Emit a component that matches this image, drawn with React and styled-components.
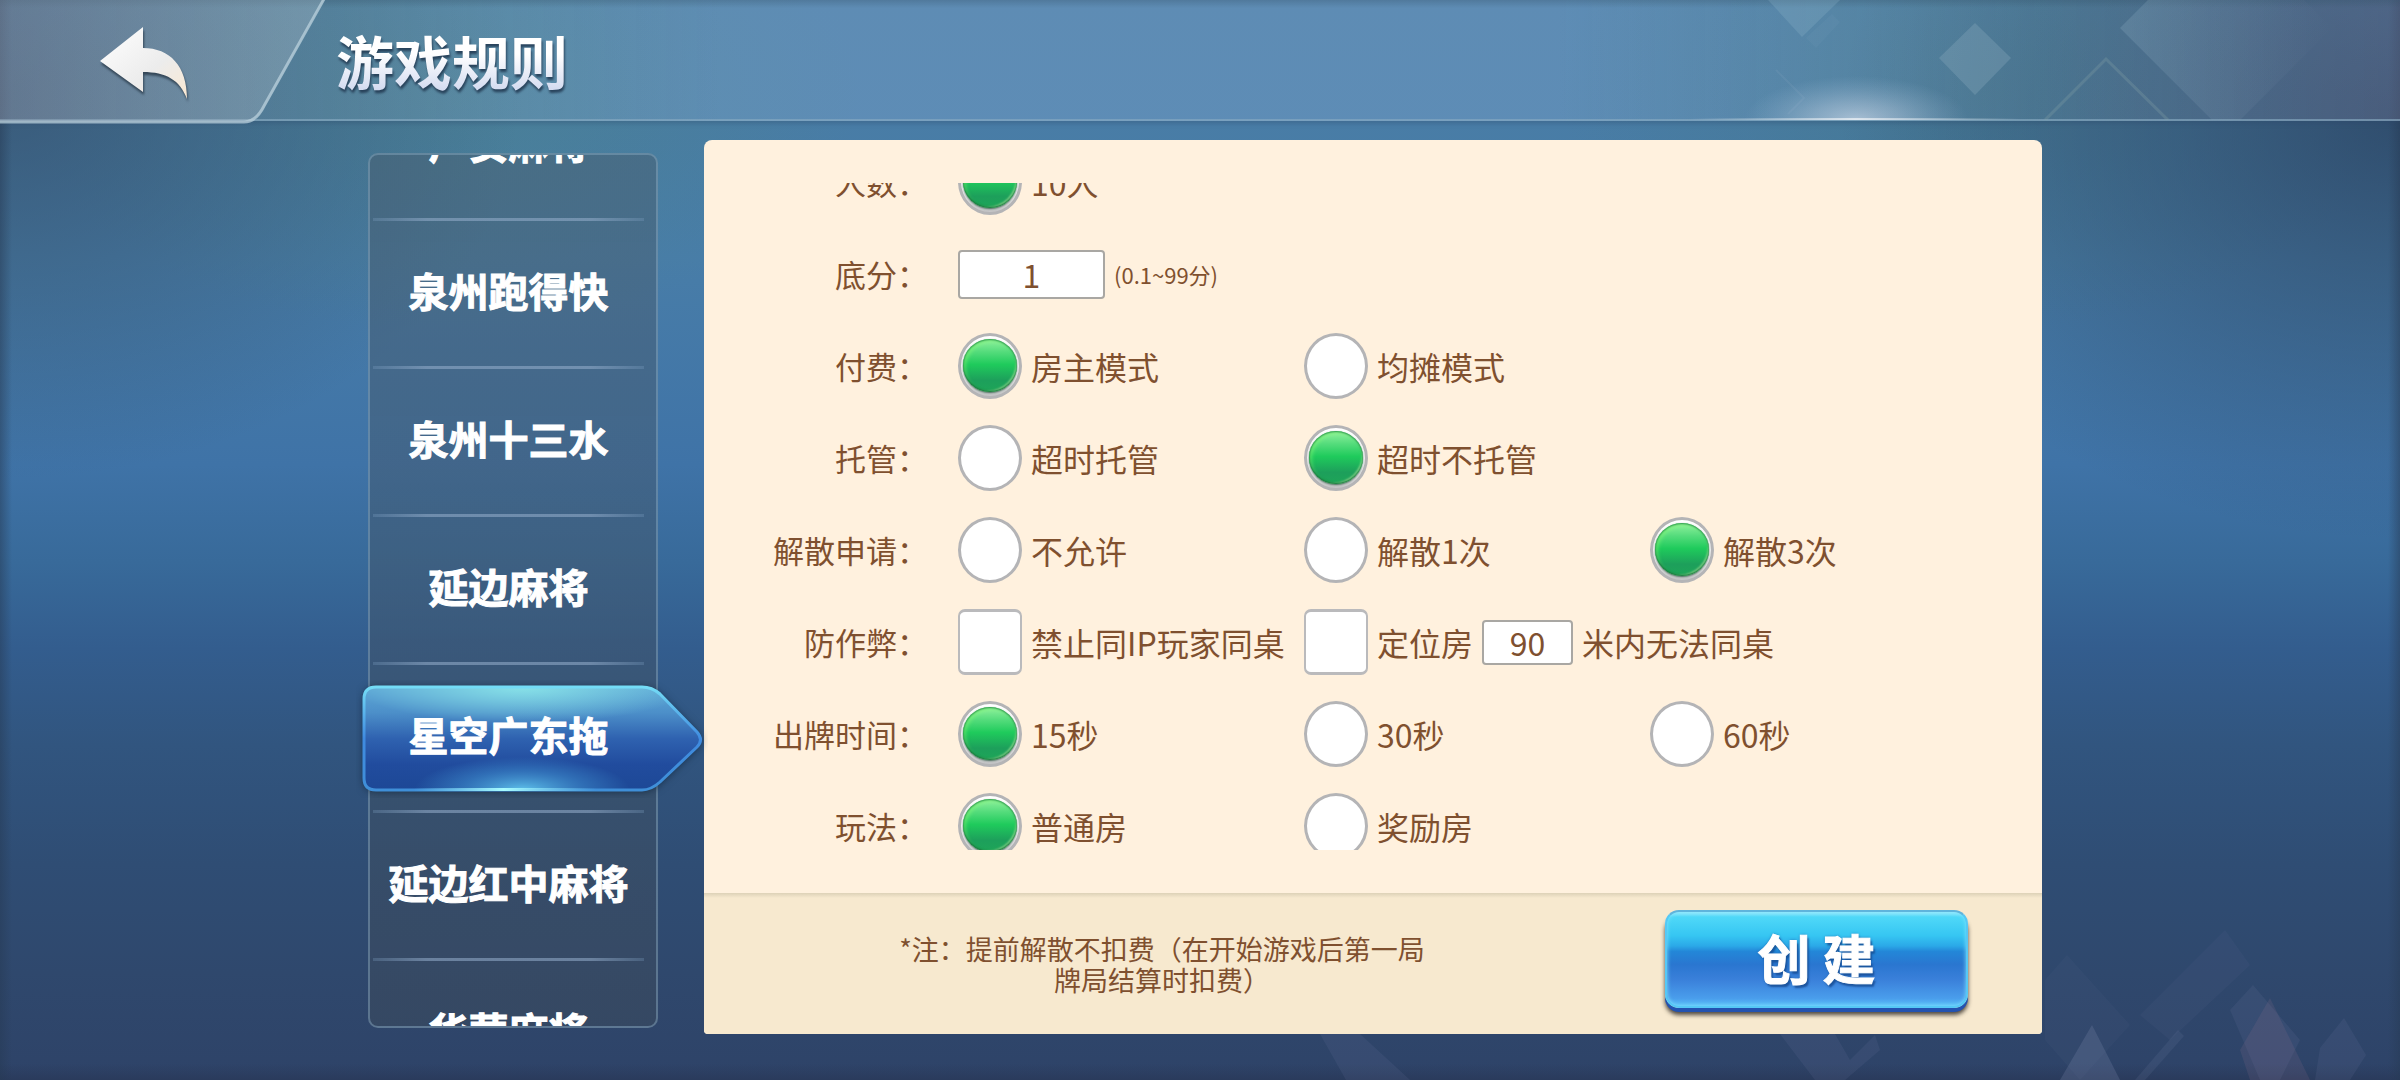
import React, { useState } from "react";
import styled, { createGlobalStyle, css } from "styled-components";

const sans = `"Noto Sans CJK SC", "Noto Sans", sans-serif`;
const brown = "#7f502f";

const GlobalStyle = createGlobalStyle`
  * {
    box-sizing: border-box;
  }

  body {
    margin: 0;
    font-family: ${sans};
  }

  button, input {
    font-family: inherit;
  }
`;

const Page = styled.div`
  position: relative;
  display: flex;
  flex-direction: column;
  height: 100vh;
  overflow: hidden;
  background:
    linear-gradient(90deg, rgba(38, 58, 84, 0.5) 0, rgba(38, 58, 84, 0) 12px),
    linear-gradient(270deg, rgba(38, 58, 84, 0.5) 0, rgba(38, 58, 84, 0) 12px),
    linear-gradient(0deg, rgba(38, 50, 80, 0.5) 0, rgba(38, 50, 80, 0) 16px),
    radial-gradient(ellipse 520px 380px at 0 100px, rgba(52, 80, 108, 0.75), rgba(52, 86, 112, 0)),
    radial-gradient(ellipse 560px 420px at 100% 120px, rgba(42, 66, 96, 0.8), rgba(48, 80, 110, 0)),
    radial-gradient(ellipse 420px 240px at 440px 90px, rgba(74, 130, 134, 0.5), rgba(74, 130, 134, 0)),
    radial-gradient(ellipse 420px 240px at 1980px 90px, rgba(66, 116, 130, 0.5), rgba(66, 116, 130, 0)),
    linear-gradient(
      180deg,
      #497ca4 0%,
      #487da8 24%,
      #3f73a7 43%,
      #386a9a 52%,
      #335d8e 60%,
      #31557f 69%,
      #2f4d74 80%,
      #2f486d 90%,
      #2e4368 100%
    );
`;

const Backdrop = styled.svg`
  position: absolute;
  right: 0;
  ${props => (props.$edge === "top" ? "top: 0;" : "bottom: 0;")}
  pointer-events: none;
`;

const Header = styled.header`
  position: relative;
  display: flex;
  align-items: flex-start;
  flex: none;
  height: 121px;
  border-bottom: 2px solid rgba(160, 195, 220, 0.5);
  background:
    linear-gradient(180deg, rgba(50, 80, 100, 0.3) 0, rgba(50, 80, 100, 0) 8px),
    linear-gradient(
      90deg,
      rgba(130, 150, 170, 0.25) 0%,
      rgba(120, 160, 180, 0.3) 14%,
      rgba(125, 165, 205, 0.4) 30%,
      rgba(125, 165, 205, 0.4) 65%,
      rgba(110, 150, 170, 0.25) 85%,
      rgba(120, 120, 150, 0.35) 100%
    );
  box-shadow: 0 2px 5px rgba(40, 70, 100, 0.35);
`;

const BackButton = styled.button`
  display: block;
  flex: none;
  padding: 0;
  border: 0;
  background: none;
  cursor: pointer;

  svg {
    display: block;
  }
`;

const Title = styled.h1`
  margin: 0;
  font-size: 58px;
  font-weight: 700;
  line-height: 120px;
  background: linear-gradient(180deg, #ffffff 45%, #d3dbf0 75%);
  background-clip: text;
  color: transparent;
  filter: drop-shadow(1px 3px 1px rgba(25, 45, 70, 0.75));
`;

const Main = styled.main`
  position: relative;
  display: flex;
  flex: 1;
  gap: 46px;
  min-height: 0;
  padding: 19px 358px 46px 368px;
`;

const Sidebar = styled.nav`
  flex: none;
  width: 290px;
  margin: 13px 0 6px;
  border: 2px solid rgba(150, 185, 210, 0.4);
  border-radius: 10px;
  background: linear-gradient(180deg, rgba(72, 88, 104, 0.42), rgba(64, 76, 88, 0.4));
  overflow-x: visible;
  overflow-y: clip;
`;

const GameList = styled.ul`
  margin: -82px 12px 0 3px;
  padding: 0;
  list-style: none;
`;

const GameItem = styled.li`
  height: 148px;
  border-bottom: 3px solid;
  border-image: linear-gradient(
      90deg,
      rgba(130, 165, 200, 0.25) 0%,
      rgba(150, 175, 205, 0.55) 20%,
      rgba(150, 175, 205, 0.55) 80%,
      rgba(130, 165, 200, 0.25) 100%
    )
    1;
`;

const GameButton = styled.button`
  position: relative;
  width: 100%;
  height: 100%;
  padding: 0 0 8px;
  border: 0;
  background: none;
  color: #fff;
  font-size: 40px;
  font-weight: 700;
  white-space: nowrap;
  -webkit-text-stroke: 1px #fff;
  cursor: pointer;

  span {
    position: relative;
  }
`;

const ActiveShape = styled.svg`
  position: absolute;
  left: -17px;
  top: 15px;
`;

const Panel = styled.form`
  display: flex;
  flex: 1;
  flex-direction: column;
  min-width: 0;
  border-radius: 8px 8px 4px 4px;
  background: #fff1de;
  overflow: hidden;
`;

const Rules = styled.div`
  flex: 1;
  min-height: 0;
  margin: 43px 0;
  overflow: hidden;
`;

const RuleRows = styled.div`
  margin-top: -47px;
`;

const Row = styled.div`
  display: grid;
  grid-template-columns: 254px repeat(3, 346px);
  align-items: center;
  height: 92px;
  color: ${brown};
  line-height: 46px;
  white-space: nowrap;
`;

const RowLabel = styled.span`
  padding-right: 30px;
  font-size: 31px;
  text-align: right;
`;

const Option = styled.div`
  display: flex;
  align-items: center;
  gap: 9px;
  grid-column: span ${props => props.$span || 1};
  font-size: 32px;
`;

const Choice = styled.label`
  display: flex;
  align-items: center;
  gap: 9px;
  cursor: pointer;
`;

const mark = css`
  appearance: none;
  flex: none;
  width: 64px;
  height: 66px;
  margin: 0;
  background: #fff;
  cursor: pointer;
`;

const Radio = styled.input.attrs({ type: "radio" })`
  ${mark}
  padding: 4px;
  border: 3px solid #b4b4b6;
  border-radius: 50%;

  &:checked {
    padding: 3px 2px;
    background: linear-gradient(180deg, #ffffff, #f2f2f4 60%, #c4c4c6);
  }

  &:checked::before {
    content: "";
    display: block;
    height: 53px;
    border-radius: 50%;
    background: linear-gradient(180deg, #93f2a0 0%, #55dc7c 24%, #1fcb5c 48%, #1d9f5b 78%, #1ea558 100%);
    box-shadow:
      0 1px 2px rgba(0, 60, 30, 0.7),
      inset 0 -1px 2px #0b6a33,
      inset 0 1px 2px #2d9a50,
      inset -3px -3px 2px -2px rgba(190, 250, 170, 0.7),
      inset 3px 3px 4px -1px rgba(140, 255, 120, 0.6);
  }
`;

const Checkbox = styled.input.attrs({ type: "checkbox" })`
  ${mark}
  border: 2px solid #bababc;
  border-width: 3px 2px;
  border-radius: 7px;

  &:checked {
    background: #1fcb5c;
  }
`;

const TextField = styled.input`
  width: ${props => (props.$small ? 91 : 147)}px;
  height: ${props => (props.$small ? 45 : 49)}px;
  padding: 0;
  border: 2px solid #a9a7a3;
  border-radius: 4px;
  background: #fff;
  color: ${brown};
  font-size: 32px;
  text-align: center;
`;

const Hint = styled.span`
  font-size: 22px;
`;

const Footer = styled.footer`
  display: flex;
  align-items: center;
  justify-content: space-between;
  flex: none;
  height: 141px;
  padding: 0 74px 0 188px;
  background: linear-gradient(180deg, #ddd2b8 0, #f7e9cf 5px);
`;

const Note = styled.p`
  width: 540px;
  margin: 0;
  color: ${brown};
  font-size: 27px;
  line-height: 31px;
  text-align: center;
`;

const CreateButton = styled.button`
  width: 303px;
  height: 98px;
  margin-bottom: 10px;
  padding: 0 0 4px;
  border: 2px solid #55c8f5;
  border-top-color: #5fb4dc;
  border-radius: 14px;
  background: linear-gradient(
    180deg,
    #9beafc 0,
    #4fd8f8 5px,
    #36c6f2 25%,
    #2ba9e8 36%,
    #2387d8 42%,
    #2a76d0 56%,
    #3a80da 72%,
    #4a9eec 92%,
    #5cc0f8 100%
  );
  box-shadow:
    inset 0 0 4px #7fe4ff,
    0 4px 0 #2352b0,
    0 7px 4px rgba(50, 45, 40, 0.85);
  color: #fff;
  font-size: 53px;
  font-weight: 700;
  line-height: 60px;
  -webkit-text-stroke: 1px #fff;
  text-shadow:
    0 0 3px #2465a8,
    2px 3px 2px rgba(20, 70, 140, 0.8);
  cursor: pointer;
`;

const games = ["广安麻将", "泉州跑得快", "泉州十三水", "延边麻将", "星空广东拖", "延边红中麻将", "华蓥麻将"];

const radioRows = {
  people: { label: "人数：", options: ["10人"] },
  pay: { label: "付费：", options: ["房主模式", "均摊模式"] },
  hosting: { label: "托管：", options: ["超时托管", "超时不托管"] },
  dismiss: { label: "解散申请：", options: ["不允许", "解散1次", "解散3次"] },
  time: { label: "出牌时间：", options: ["15秒", "30秒", "60秒"] },
  mode: { label: "玩法：", options: ["普通房", "奖励房"] }
};

const HeaderShapes = () => (
  <Backdrop $edge="top" width="800" height="120" viewBox="0 0 800 120" aria-hidden="true">
    <defs>
      <radialGradient id="glow">
        <stop offset="0" stopColor="#cbd8e8" stopOpacity="0.7" />
        <stop offset="0.4" stopColor="#b9cce0" stopOpacity="0.45" />
        <stop offset="1" stopColor="#9bbbd8" stopOpacity="0" />
      </radialGradient>
      <linearGradient id="shine">
        <stop offset="0" stopColor="#fff" stopOpacity="0" />
        <stop offset="0.5" stopColor="#fff" stopOpacity="0.6" />
        <stop offset="1" stopColor="#fff" stopOpacity="0" />
      </linearGradient>
      <linearGradient id="facet">
        <stop offset="0" stopColor="#8fb0c4" stopOpacity="0.26" />
        <stop offset="1" stopColor="#8fa0b8" stopOpacity="0" />
      </linearGradient>
    </defs>
    <path d="M168 0H240L202 37Z" fill="#8fb8cc" fillOpacity="0.25" />
    <path d="M232 14L240 22L216 48L206 38Z" fill="#8fb8cc" fillOpacity="0.08" />
    <path d="M375 23L411 58L375 95L339 58Z" fill="#86a5bb" fillOpacity="0.36" />
    <path d="M520 28L548 0H704L732 28L640 120H612Z" fill="url(#facet)" />
    <path d="M445 120L506 59L568 120" fill="none" stroke="#8aa6a8" strokeOpacity="0.28" strokeWidth="3" />
    <path d="M176 70L204 98L188 114" fill="none" stroke="#9ab8cc" strokeOpacity="0.12" strokeWidth="2" />
    <ellipse cx="256" cy="120" rx="112" ry="44" fill="url(#glow)" />
    <rect x="90" y="118" width="330" height="2" fill="url(#shine)" />
  </Backdrop>
);

const FloorShapes = () => (
  <Backdrop $edge="bottom" width="1100" height="200" viewBox="0 0 1100 200" aria-hidden="true">
    <g fill="#7a86ac" fillOpacity="0.12">
      <path d="M20 154H60L110 200H46Z" />
      <path d="M480 154H535L550 180L575 155L580 170L545 200H515Z" />
      <path d="M767 75L830 145L780 200L745 160V100Z" fillOpacity="0.06" />
      <path d="M925 50L950 85L870 160L840 135Z" fillOpacity="0.07" />
      <path d="M792 145L820 200H760Z" fillOpacity="0.25" />
      <path d="M953 105L1000 160L980 200H960L930 130Z" />
      <path d="M970 118L1010 200H950L940 170Z" fill="#a07a94" fillOpacity="0.14" />
      <path d="M1044 138L1066 175L1050 200H1015L1020 168Z" />
      <path d="M878 150L884 156L845 200H835Z" fillOpacity="0.14" />
    </g>
  </Backdrop>
);

const BackTab = () => (
  <svg width="336" height="126" viewBox="0 0 336 126" aria-hidden="true">
    <defs>
      <linearGradient id="tab">
        <stop offset="0" stopColor="#8a8fa0" stopOpacity="0.36" />
        <stop offset="1" stopColor="#b8c8d0" stopOpacity="0.3" />
      </linearGradient>
      <linearGradient id="arrow" x1="0" y1="0" x2="1" y2="1">
        <stop offset="0" stopColor="#ffffff" />
        <stop offset="0.6" stopColor="#ececec" />
        <stop offset="1" stopColor="#fbe9d2" />
      </linearGradient>
    </defs>
    <path d="M0 0H324L264 108Q256 122 244 122H0Z" fill="url(#tab)" />
    <path
      d="M324 -1L264 106Q256 122 244 122H0"
      fill="none"
      stroke="#b9d0dc"
      strokeOpacity="0.75"
      strokeWidth="3"
    />
    <path
      d="M100 61L143 27V48C170 48 187 66 187 99C180 80 166 72 143 72V92Z"
      fill="url(#arrow)"
      filter="drop-shadow(1px 3px 1px rgba(30, 45, 60, 0.7))"
    />
  </svg>
);

const ActiveTab = () => (
  <ActiveShape width="352" height="118" viewBox="0 0 352 118" aria-hidden="true">
    <defs>
      <linearGradient id="activeFill" x1="0" y1="0" x2="0" y2="1">
        <stop offset="0" stopColor="#5fa9d6" />
        <stop offset="0.25" stopColor="#4c8fc9" />
        <stop offset="0.5" stopColor="#2f62b0" />
        <stop offset="0.75" stopColor="#214c9e" />
        <stop offset="1" stopColor="#1d4896" />
      </linearGradient>
      <linearGradient id="activeEdge" x1="0" y1="0" x2="0" y2="1">
        <stop offset="0" stopColor="#74dcf6" />
        <stop offset="0.5" stopColor="#3f8be0" />
        <stop offset="1" stopColor="#3f8fd8" />
      </linearGradient>
      <radialGradient id="activeTop" cx="0.47" cy="0" r="0.5" gradientTransform="scale(1 0.7)">
        <stop offset="0" stopColor="#8ce8ea" stopOpacity="0.9" />
        <stop offset="1" stopColor="#8ce8ea" stopOpacity="0" />
      </radialGradient>
      <radialGradient id="activeBottom" cx="0.47" cy="1" r="0.32">
        <stop offset="0" stopColor="#62c8f0" stopOpacity="0.95" />
        <stop offset="0.6" stopColor="#3f90d0" stopOpacity="0.5" />
        <stop offset="1" stopColor="#3f90d0" stopOpacity="0" />
      </radialGradient>
      <linearGradient id="activeLine">
        <stop offset="0.15" stopColor="#8ff0ff" stopOpacity="0" />
        <stop offset="0.47" stopColor="#a8fbff" />
        <stop offset="0.8" stopColor="#8ff0ff" stopOpacity="0" />
      </linearGradient>
      <path
        id="activeOutline"
        d="M20 7H286Q296 7 304 14L341 52Q348 60 341 67L304 102Q295 110 286 110H20Q8 110 8 98V19Q8 7 20 7Z"
      />
    </defs>
    <use
      href="#activeOutline"
      fill="url(#activeFill)"
      filter="drop-shadow(0 1px 4px rgba(10, 30, 50, 0.8))"
    />
    <use href="#activeOutline" fill="url(#activeTop)" />
    <use href="#activeOutline" fill="url(#activeBottom)" />
    <use href="#activeOutline" fill="none" stroke="url(#activeEdge)" strokeWidth="3" />
    <rect x="16" y="108" width="280" height="3" fill="url(#activeLine)" />
  </ActiveShape>
);

const RadioRow = ({ name, value, onPick }) => {
  const { label, options } = radioRows[name];
  return (
    <Row role="radiogroup" aria-labelledby={`${name}-label`}>
      <RowLabel id={`${name}-label`}>{label}</RowLabel>
      {options.map((text, i) => (
        <Option key={text}>
          <Choice>
            <Radio name={name} checked={value === i} onChange={() => onPick(name, i)} />
            {text}
          </Choice>
        </Option>
      ))}
    </Row>
  );
};

const App = () => {
  const [game, setGame] = useState(4);
  const [rules, setRules] = useState({
    people: 0,
    pay: 0,
    hosting: 1,
    dismiss: 2,
    time: 0,
    mode: 0
  });

  const pick = (name, i) => setRules({ ...rules, [name]: i });
  const radioRow = name => <RadioRow name={name} value={rules[name]} onPick={pick} />;

  return (
    <Page>
      <GlobalStyle />
      <FloorShapes />
      <Header>
        <HeaderShapes />
        <BackButton type="button" aria-label="返回">
          <BackTab />
        </BackButton>
        <Title>游戏规则</Title>
      </Header>
      <Main>
        <Sidebar>
          <GameList>
            {games.map((name, i) => (
              <GameItem key={name}>
                <GameButton type="button" onClick={() => setGame(i)}>
                  {i === game ? <ActiveTab /> : null}
                  <span>{name}</span>
                </GameButton>
              </GameItem>
            ))}
          </GameList>
        </Sidebar>
        <Panel onSubmit={e => e.preventDefault()}>
          <Rules>
            <RuleRows>
              {radioRow("people")}
              <Row>
                <RowLabel as="label" htmlFor="base">
                  底分：
                </RowLabel>
                <Option>
                  <TextField id="base" type="text" defaultValue="1" />
                  <Hint>(0.1~99分)</Hint>
                </Option>
              </Row>
              {radioRow("pay")}
              {radioRow("hosting")}
              {radioRow("dismiss")}
              <Row role="group" aria-labelledby="cheat-label">
                <RowLabel id="cheat-label">防作弊：</RowLabel>
                <Option>
                  <Choice>
                    <Checkbox />
                    禁止同IP玩家同桌
                  </Choice>
                </Option>
                <Option $span={2}>
                  <Choice>
                    <Checkbox />
                    定位房
                  </Choice>
                  <TextField $small id="distance" type="text" defaultValue="90" />
                  <label htmlFor="distance">米内无法同桌</label>
                </Option>
              </Row>
              {radioRow("time")}
              {radioRow("mode")}
            </RuleRows>
          </Rules>
          <Footer>
            <Note>*注：提前解散不扣费（在开始游戏后第一局牌局结算时扣费）</Note>
            <CreateButton type="submit">创 建</CreateButton>
          </Footer>
        </Panel>
      </Main>
    </Page>
  );
};

export default App;
